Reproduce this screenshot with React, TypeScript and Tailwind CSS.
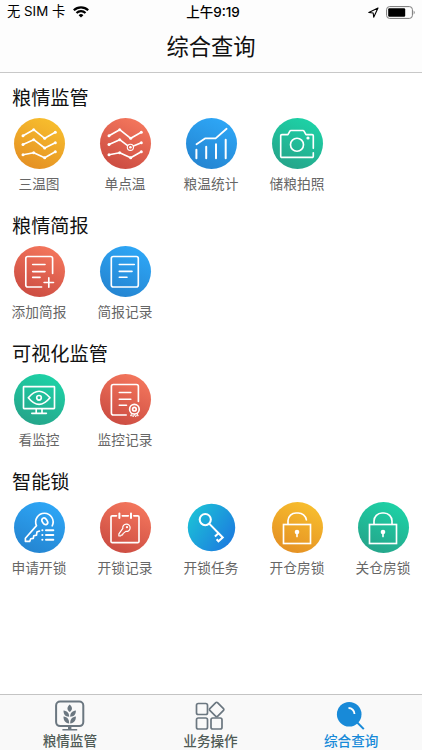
import { useState } from 'react';
import type { ReactNode } from 'react';

interface MenuItem {
  label: string;
  bg: string;
  icon: ReactNode;
}

interface MenuSection {
  title: string;
  items: MenuItem[];
}

const colors = {
  yellow: 'bg-linear-[205deg] from-[#fac42f] to-[#e28a22]',
  red: 'bg-linear-[205deg] from-[#f97c60] to-[#c6463e]',
  blue: 'bg-linear-[205deg] from-[#2fabfb] to-[#2380cc]',
  green: 'bg-linear-[205deg] from-[#1cd8aa] to-[#269e86]',
  cyan: 'bg-linear-[125deg] from-[#1cc9d6] to-[#1c72e0] scale-[0.93]',
};

const dots = [
  [9, 17.7], [19.7, 11.7], [30.7, 20.3], [41.3, 14.3],
  [9, 26.5], [19.7, 21.7], [30.7, 30], [41.3, 24.7],
  [9, 36.7], [19.7, 34.7], [30.7, 39.7], [41.3, 33.7],
];

function Waves({ marker = false }: { marker?: boolean }) {
  return (
    <>
      <path d="M9 17.7 19.7 11.7 30.7 20.3 41.3 14.3" />
      <path d={marker ? 'M9 26.5 19.7 21.7 27.6 27.6M33.4 28 41.3 24.7' : 'M9 26.5 19.7 21.7 30.7 30 41.3 24.7'} />
      <path d="M9 36.7 19.7 34.7 30.7 39.7 41.3 33.7" />
      {dots
        .filter((_, i) => !marker || i !== 6)
        .map(([x, y]) => (
          <circle key={`${x}-${y}`} cx={x} cy={y} r="1.5" fill="white" stroke="none" />
        ))}
      {marker && (
        <>
          <circle cx="30.4" cy="29.3" r="3.1" strokeWidth="1.1" />
          <circle cx="30.4" cy="29.3" r="1.3" fill="white" stroke="none" />
        </>
      )}
    </>
  );
}

function Lock({ open = false }: { open?: boolean }) {
  return (
    <>
      <rect x="11.5" y="22.5" width="27" height="19" strokeLinejoin="miter" />
      <path d={open ? 'M16 22.3V18.5a8 8 0 0 1 8-7.5h2.2a8.2 8.2 0 0 1 8.2 6.8' : 'M16 22.3V19a8 8 0 0 1 8-8h2a8 8 0 0 1 8 8v3.3'} />
      <circle cx="25" cy="30" r="2.3" fill="white" stroke="none" />
      <path d="M25 30v4.6" />
    </>
  );
}

const sections: MenuSection[] = [
  {
    title: '粮情监管',
    items: [
      { label: '三温图', bg: colors.yellow, icon: <Waves /> },
      { label: '单点温', bg: colors.red, icon: <Waves marker /> },
      {
        label: '粮温统计',
        bg: colors.blue,
        icon: (
          <>
            <path d="M10.4 31.7v8.6M20.2 28.7v11.6M30 26.3v14M39.7 21.7v18.6" strokeWidth="2" />
            <path d="M10.5 26.3 19 20.4h10.6L40.6 10.8" strokeWidth="1.8" />
          </>
        ),
      },
      {
        label: '储粮拍照',
        bg: colors.green,
        icon: (
          <>
            <path d="M41.3 30.3V17.8a1.2 1.2 0 0 0-1.2-1.2H34l-2-3.5a1.2 1.2 0 0 0-1-.6H19a1.2 1.2 0 0 0-1.1.6l-2 3.5h-6a1.2 1.2 0 0 0-1.2 1.2v20.4a1.2 1.2 0 0 0 1.2 1.2h30.2a1.2 1.2 0 0 0 1.2-1.2v-3.5" />
            <circle cx="25" cy="26.7" r="6.5" />
            <circle cx="36" cy="20" r="1.6" fill="white" stroke="none" />
          </>
        ),
      },
    ],
  },
  {
    title: '粮情简报',
    items: [
      {
        label: '添加简报',
        bg: colors.red,
        icon: (
          <>
            <path d="M38.6 27.5v-15a2 2 0 0 0-2-2H13.8a2 2 0 0 0-2 2V39a2 2 0 0 0 2 2h13.8" />
            <path d="M18.7 18.5H31M18.7 25.6H31M18.7 31.4H26M34.8 31.8v9.4M30.1 36.5h9.4" />
          </>
        ),
      },
      {
        label: '简报记录',
        bg: colors.blue,
        icon: (
          <>
            <rect x="11.3" y="10.5" width="27" height="30.5" rx="2" />
            <path d="M19.3 18.5H34.3M19.3 25.4H32M19.3 31.2H27" />
          </>
        ),
      },
    ],
  },
  {
    title: '可视化监管',
    items: [
      {
        label: '看监控',
        bg: colors.green,
        icon: (
          <>
            <rect x="9.5" y="12.6" width="31" height="22" rx="0.5" />
            <path d="M14.3 23.8Q25 10.6 36 23.8Q25 37 14.3 23.8Z" />
            <circle cx="25" cy="23.8" r="2.3" />
            <path d="M22.2 34.7v4M28 34.7v4M17.8 39.3h14.6" />
          </>
        ),
      },
      {
        label: '监控记录',
        bg: colors.red,
        icon: (
          <>
            <path d="M38.4 27.5v-15a2 2 0 0 0-2-2h-23a2 2 0 0 0-2 2V39a2 2 0 0 0 2 2h12.8" />
            <path d="M19.3 18.5H30.8M19.3 25.2H30.8M19.3 31.2H26.5" />
            <circle cx="34.4" cy="35.2" r="4.8" />
            <circle cx="34.4" cy="35.2" r="1.8" />
            <path d="m31.8 39.5-1.3 2.3 1.9-.2.8 1.2 1.2-2.5 1.2 2.5.8-1.2 1.9.2-1.3-2.3" strokeWidth="1" />
          </>
        ),
      },
    ],
  },
  {
    title: '智能锁',
    items: [
      {
        label: '申请开锁',
        bg: colors.blue,
        icon: (
          <>
            <path d="M38.2 23.8A8.7 8.7 0 1 0 22.5 23.6L11.4 36.2v3.2h4.3l1-2.6 2.6-.4.5-2.7 2.7-.6.4-3 2.6-1.1" />
            <ellipse cx="30.8" cy="19.3" rx="2.4" ry="3.6" transform="rotate(-35 30.8 19.3)" />
            <path d="M32 28.2h7.3M32 33h7.3M32 37.8h7.3M28.3 28.2h.1M28.3 33h.1M28.3 37.8h.1" strokeWidth="2" />
          </>
        ),
      },
      {
        label: '开锁记录',
        bg: colors.red,
        icon: (
          <>
            <path d="M16.5 13.8h-4.3a1.2 1.2 0 0 0-1.2 1.2v24.4a1.2 1.2 0 0 0 1.2 1.2h25.6a1.2 1.2 0 0 0 1.2-1.2V15a1.2 1.2 0 0 0-1.2-1.2h-4M22.3 13.8h6" />
            <path d="M19.4 11.4v4.6M31 11.4v4.6" strokeWidth="2" />
            <path d="M22.8 26.4a3.7 3.7 0 1 1 3 3L23 31.6l-.4 1.3-1.4.2-.6.9h-1.7v-2.1Z" strokeWidth="1.2" />
            <circle cx="27" cy="25.2" r="1.1" fill="white" stroke="none" />
          </>
        ),
      },
      {
        label: '开锁任务',
        bg: colors.cyan,
        icon: (
          <g strokeWidth="2.2" strokeLinecap="butt" strokeLinejoin="miter">
            <circle cx="18.8" cy="17" r="6" />
            <path d="M23 21.3 37.6 36.2 33 40.4 31 38.2M33 31.6 29.2 35.200" />
          </g>
        ),
      },
      { label: '开仓房锁', bg: colors.yellow, icon: <Lock open /> },
      { label: '关仓房锁', bg: colors.green, icon: <Lock /> },
    ],
  },
];

const tabs = [
  {
    label: '粮情监管',
    icon: (
      <>
        <rect x="2.1" y="1.5" width="27.2" height="24.6" rx="4" fill="none" stroke="currentColor" strokeWidth="2" />
        <path d="M14 26.5h3.4V29h5.8v1.6H8.4V29H14Z" />
        <path d="M15.7 4.5c3 2.8 3 5.2 0 7.6-3-2.4-3-4.800 0-7.600Z" />
        <path d="M9.5 10.400c4 .6 5.600 2.500 5.700 6.400-4.200-.6-5.700-2.500-5.700-6.400ZM21.900 10.400c-4 .6-5.600 2.500-5.700 6.400 4.200-.6 5.700-2.500 5.700-6.400Z" />
        <path d="M9.500 16.600c4 .6 5.600 2.500 5.700 7-4.200-.8-5.700-3-5.700-7ZM21.900 16.600c-4 .6-5.600 2.500-5.700 7 4.200-.8 5.700-3 5.700-7Z" />
      </>
    ),
  },
  {
    label: '业务操作',
    icon: (
      <g fill="none" stroke="currentColor" strokeWidth="1.7" strokeLinejoin="round">
        <rect x="2.5" y="3.5" width="11" height="11" rx="1.8" />
        <rect x="2.5" y="18" width="11" height="11" rx="1.8" />
        <rect x="17" y="18" width="11" height="11" rx="1.8" />
        <path d="M21.800 2.600a1.200 1.200 0 0 1 1.700 0l6 6a1.200 1.200 0 0 1 0 1.700l-6 6a1.200 1.200 0 0 1-1.700 0l-6-6a1.200 1.200 0 0 1 0-1.700Z" />
      </g>
    ),
  },
  {
    label: '综合查询',
    icon: (
      <>
        <circle cx="14.2" cy="14.2" r="12.3" />
        <path d="m21.500 21.800 7.300 7.300" stroke="currentColor" strokeWidth="2" />
        <path d="M13.500 8a6 6 0 0 1 6 6" fill="none" stroke="white" strokeWidth="1.800" />
      </>
    ),
  },
];

function StatusBar() {
  return (
    <div className="grid h-6 grid-cols-3 items-center px-[7px] text-black">
      <div className="flex items-center gap-2">
        <span className="text-[13.3px] whitespace-nowrap">无 SIM 卡</span>
        <svg className="h-3 w-4" viewBox="0 0 16 12" fill="none" stroke="currentColor" strokeWidth="2.2">
          <path d="M.8 4.300a10.300 10.300 0 0 1 14.400 0M3.500 7a6.400 6.400 0 0 1 9 0" />
          <path d="M5.600 9.200a3.400 3.400 0 0 1 4.800 0L8 11.600Z" fill="currentColor" stroke="none" />
        </svg>
      </div>
      <div className="pl-1 text-center text-[13.5px] font-medium">上午9:19</div>
      <div className="flex items-center justify-end gap-[7px]">
        <svg className="h-[11px] w-[11px]" viewBox="0 0 11 11" fill="none" stroke="currentColor" strokeWidth="1.1" strokeLinejoin="round">
          <path d="M10 1 .8 5.500l4.400.5.500 4.200Z" />
        </svg>
        <svg className="-mr-[1px] h-[13px] w-[30px]" viewBox="0 0 30 13">
          <rect x=".6" y=".6" width="25.8" height="11.8" rx="3" fill="none" stroke="#777" strokeWidth="1" />
          <rect x="2.2" y="2.2" width="17" height="8.6" rx="1.2" />
          <path d="M27.700 4.500q2 2 0 4Z" fill="#777" />
        </svg>
      </div>
    </div>
  );
}

export default function App() {
  const [activeTab, setActiveTab] = useState('综合查询');

  return (
    <div className="flex h-screen flex-col bg-white font-['Inter','Noto_Sans_CJK_SC',sans-serif]">
      <header className="h-[73px] shrink-0 border-b border-[#c8c8c8] bg-[#fdfdfd]">
        <StatusBar />
        <h1 className="text-center text-[22.3px] leading-[46px] text-[#111]">综合查询</h1>
      </header>

      <main className="flex flex-1 flex-col gap-[19px] pt-3">
        {sections.map((section) => (
          <section key={section.title}>
            <h2 className="mb-[7px] pt-px pl-3 text-[19.2px] leading-[25px] text-[#111]">{section.title}</h2>
            <div className="flex pl-[1px]">
              {section.items.map((item) => (
                <button key={item.label} type="button" className="flex w-[86px] shrink-0 flex-col items-center pr-[10px]">
                  <span className={`h-[51px] w-[51px] rounded-full ${item.bg}`}>
                    <svg
                      className="h-full w-full"
                      viewBox="0 0 51 51"
                      fill="none"
                      stroke="white"
                      strokeWidth="1.65"
                      strokeLinecap="round"
                      strokeLinejoin="round"
                    >
                      {item.icon}
                    </svg>
                  </span>
                  <span className="mt-[5px] text-[13.7px] leading-5 whitespace-nowrap text-[#666]">{item.label}</span>
                </button>
              ))}
            </div>
          </section>
        ))}
      </main>

      <nav className="grid h-14 shrink-0 grid-cols-3 border-t border-[#c4c4c4] bg-[#f9f9f9]">
        {tabs.map((tab) => (
          <button
            key={tab.label}
            type="button"
            onClick={() => setActiveTab(tab.label)}
            className={`flex flex-col items-center pt-[5px] pr-px ${activeTab === tab.label ? 'text-[#188ad8]' : 'text-[#6b7780]'}`}
          >
            <svg className="h-8 w-8 shrink-0" viewBox="0 0 32 32" fill="currentColor">
              {tab.icon}
            </svg>
            <span
              className={`text-[13.6px] leading-[18px] font-medium ${activeTab === tab.label ? '' : 'text-[#4f5b56]'}`}
            >
              {tab.label}
            </span>
          </button>
        ))}
      </nav>
    </div>
  );
}
